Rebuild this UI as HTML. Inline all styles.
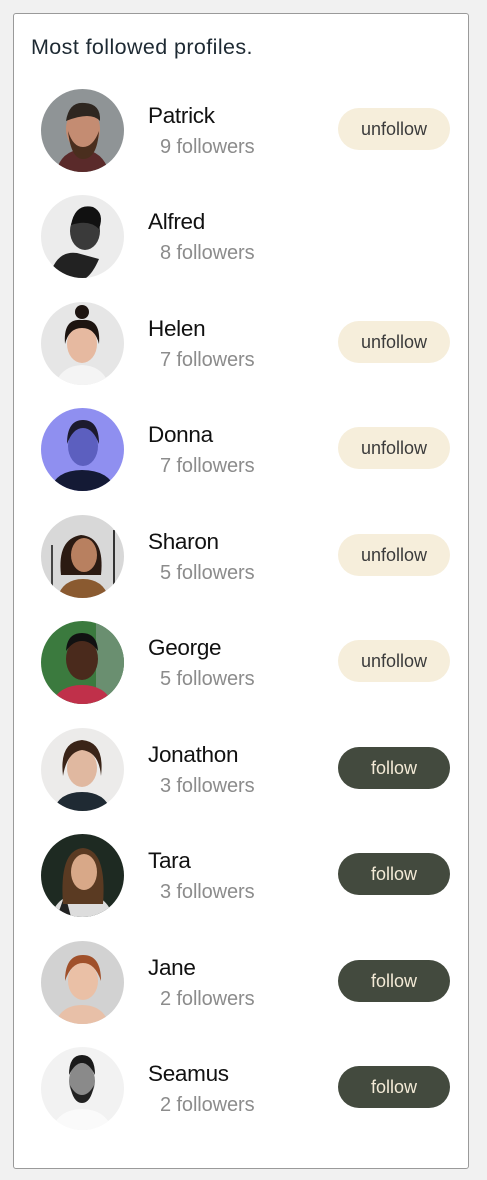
<!DOCTYPE html>
<html><head><style>
body{margin:0;background:#f1f1f1;width:487px;height:1180px;position:relative;font-family:"Liberation Sans",sans-serif;overflow:hidden}
.card{position:absolute;left:13px;top:13px;width:454px;height:1154px;background:#fff;border:1px solid #9a9a9a;border-radius:3px}
h1{position:absolute;left:17px;top:21px;margin:0;font-weight:normal;font-size:21.5px;color:#1e2a33;letter-spacing:0.4px}
.row{position:absolute;left:0;width:454px;height:84px}
.av{position:absolute;left:27px;top:0;width:83px;height:83px;border-radius:50%;overflow:hidden}
.name{position:absolute;left:134px;top:14px;font-size:22.5px;color:#111;letter-spacing:-0.3px}
.fol{position:absolute;left:146px;top:47px;font-size:20px;color:#8c8c8c;letter-spacing:-0.1px}
.btn{position:absolute;left:324px;top:19px;width:112px;height:42px;border-radius:21px;font-size:18px;text-align:center;line-height:42px}
.un{background:#f6eedb;color:#3b3b3b}
.fo{background:#434a3e;color:#f3ead6}
</style></head><body>
<div class="card">
<h1>Most followed profiles.</h1>

<div class="row" style="top:75px"><div class="av"><svg width="83" height="83"><rect width="83" height="83" fill="#8f9496"/><path d="M15 83 Q20 62 41 60 Q62 62 68 83Z" fill="#5a2a2a"/><ellipse cx="42" cy="40" rx="17" ry="22" fill="#c48c72"/><path d="M27 42 Q30 70 42 70 Q56 70 58 42 Q52 58 42 58 Q32 58 27 42Z" fill="#4a2e1e"/><path d="M25 32 Q28 12 44 14 Q60 15 59 32 Q50 22 25 32Z" fill="#2e2620"/></svg></div><div class="name">Patrick</div><div class="fol">9 followers</div><div class="btn un">unfollow</div></div>

<div class="row" style="top:181px"><div class="av"><svg width="83" height="83"><rect width="83" height="83" fill="#ececec"/><path d="M8 83 Q15 55 36 58 L58 64 Q52 78 45 83Z" fill="#222"/><ellipse cx="44" cy="36" rx="15" ry="19" fill="#3a3a3a"/><path d="M30 30 Q34 8 52 12 Q64 18 58 34 Q48 24 30 30Z" fill="#111"/></svg></div><div class="name">Alfred</div><div class="fol">8 followers</div></div>

<div class="row" style="top:288px"><div class="av"><svg width="83" height="83"><rect width="83" height="83" fill="#e6e6e6"/><path d="M14 83 Q20 64 41 63 Q62 64 68 83Z" fill="#f4f4f4"/><ellipse cx="41" cy="42" rx="15" ry="19" fill="#e6b9a0"/><path d="M24 42 Q22 16 41 18 Q60 16 58 42 Q54 26 41 26 Q28 26 24 42Z" fill="#1d1410"/><circle cx="41" cy="10" r="7" fill="#1d1410"/></svg></div><div class="name">Helen</div><div class="fol">7 followers</div><div class="btn un">unfollow</div></div>

<div class="row" style="top:394px"><div class="av"><svg width="83" height="83"><rect width="83" height="83" fill="#8f8ff0"/><path d="M8 83 Q15 62 41 62 Q68 62 76 83Z" fill="#141a35"/><ellipse cx="42" cy="38" rx="15" ry="20" fill="#5c5fbf"/><path d="M26 36 Q26 12 42 12 Q58 12 58 36 Q52 20 42 20 Q32 20 26 36Z" fill="#1c1a2e"/></svg></div><div class="name">Donna</div><div class="fol">7 followers</div><div class="btn un">unfollow</div></div>

<div class="row" style="top:501px"><div class="av"><svg width="83" height="83"><rect width="83" height="83" fill="#d8d8d8"/><path d="M16 83 Q22 64 42 64 Q62 64 68 83Z" fill="#8a5a30"/><path d="M20 60 Q16 24 40 20 Q64 22 60 60Z" fill="#2b1a12"/><ellipse cx="43" cy="40" rx="13" ry="17" fill="#b88060"/><rect x="72" y="15" width="2" height="60" fill="#333"/><rect x="10" y="30" width="2" height="50" fill="#444"/></svg></div><div class="name">Sharon</div><div class="fol">5 followers</div><div class="btn un">unfollow</div></div>

<div class="row" style="top:607px"><div class="av"><svg width="83" height="83"><rect width="83" height="83" fill="#3b7a3e"/><rect x="55" width="28" height="83" fill="#6a8f70"/><path d="M10 83 Q18 64 41 64 Q64 64 72 83Z" fill="#c0304a"/><ellipse cx="41" cy="38" rx="16" ry="21" fill="#4a2a1c"/><path d="M25 30 Q26 12 41 12 Q56 12 57 30 Q50 20 41 20 Q32 20 25 30Z" fill="#111"/></svg></div><div class="name">George</div><div class="fol">5 followers</div><div class="btn un">unfollow</div></div>

<div class="row" style="top:714px"><div class="av"><svg width="83" height="83"><rect width="83" height="83" fill="#ecebea"/><path d="M12 83 Q18 64 41 64 Q64 64 70 83Z" fill="#1f2a33"/><ellipse cx="41" cy="40" rx="15" ry="19" fill="#e0b8a0"/><path d="M22 48 Q18 14 41 12 Q64 14 60 48 Q58 24 41 22 Q26 24 22 48Z" fill="#3a2418"/></svg></div><div class="name">Jonathon</div><div class="fol">3 followers</div><div class="btn fo">follow</div></div>

<div class="row" style="top:820px"><div class="av"><svg width="83" height="83"><rect width="83" height="83" fill="#1e2a22"/><path d="M10 83 Q16 60 41 60 Q66 60 72 83Z" fill="#ddd"/><path d="M16 83 L24 60 L30 83Z" fill="#222"/><path d="M22 70 Q18 16 42 14 Q66 16 62 70Z" fill="#5a3a22"/><ellipse cx="43" cy="38" rx="13" ry="18" fill="#d8a888"/></svg></div><div class="name">Tara</div><div class="fol">3 followers</div><div class="btn fo">follow</div></div>

<div class="row" style="top:927px"><div class="av"><svg width="83" height="83"><rect width="83" height="83" fill="#d2d2d2"/><path d="M14 83 Q20 64 41 64 Q62 64 68 83Z" fill="#e8c0a8"/><ellipse cx="42" cy="40" rx="15" ry="19" fill="#eac0a6"/><path d="M24 40 Q24 14 42 14 Q60 14 60 40 Q54 22 42 22 Q30 22 24 40Z" fill="#a0502a"/></svg></div><div class="name">Jane</div><div class="fol">2 followers</div><div class="btn fo">follow</div></div>

<div class="row" style="top:1033px"><div class="av"><svg width="83" height="83"><rect width="83" height="83" fill="#f2f2f2"/><path d="M10 83 Q18 62 41 62 Q64 62 72 83Z" fill="#fafafa"/><ellipse cx="41" cy="34" rx="13" ry="18" fill="#8a8a8a"/><path d="M29 38 Q32 56 41 56 Q50 56 53 38 Q48 48 41 48 Q34 48 29 38Z" fill="#222"/><path d="M28 28 Q28 8 41 8 Q54 8 54 28 Q48 16 41 16 Q34 16 28 28Z" fill="#1a1a1a"/></svg></div><div class="name">Seamus</div><div class="fol">2 followers</div><div class="btn fo">follow</div></div>
</div>
</body></html>
